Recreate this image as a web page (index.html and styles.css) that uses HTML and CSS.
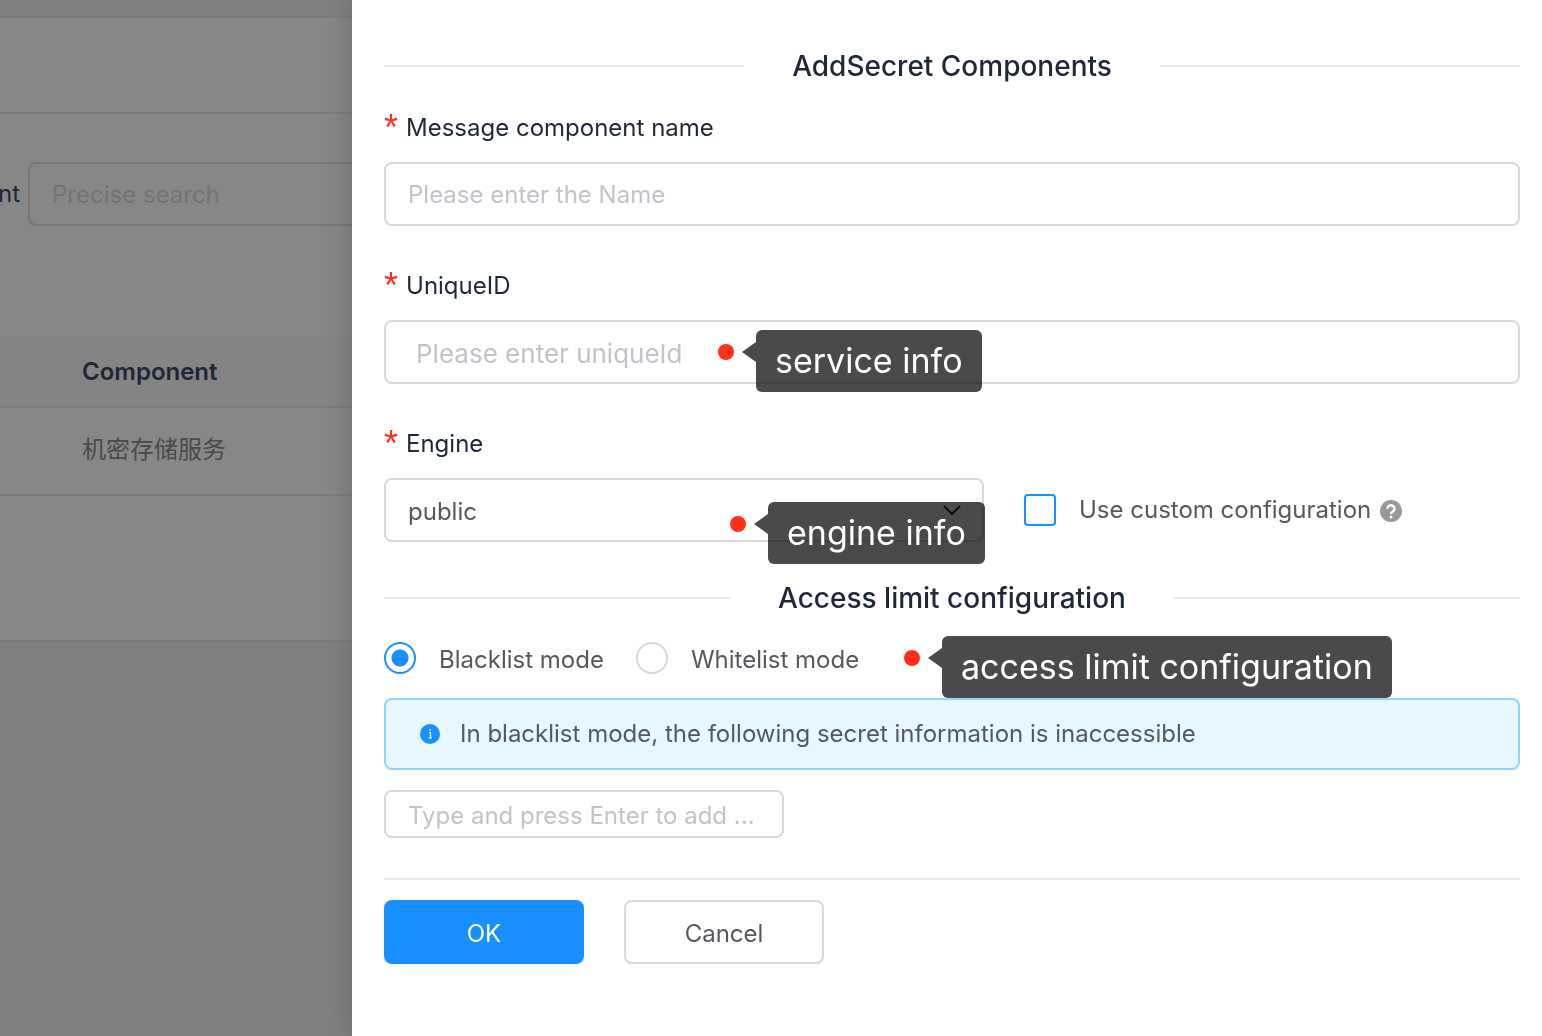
FILE: index.html
```
<!DOCTYPE html>
<html lang="en">
<head>
    <meta charset="UTF-8">
    <meta name="viewport" content="width=device-width, initial-scale=1.0">
    <title>AddSecret Components</title>
    <link rel="stylesheet" href="styles.css">
</head>
<body>
    <main class="page">
        <div class="page-header"></div>

        <div class="search-bar">
            <label for="search">nt</label>
            <input id="search" class="input" type="text" placeholder="Precise search">
        </div>

        <table class="list">
            <thead>
                <tr><th>Component</th></tr>
            </thead>
            <tbody>
                <tr><td>机密存储服务</td></tr>
            </tbody>
        </table>
    </main>

    <div class="mask"></div>

    <form class="drawer">
        <h2 class="divider">AddSecret Components</h2>

        <div class="field">
            <label class="field-label" for="name"><span class="required">*</span>Message component name</label>
            <input id="name" class="input" type="text" placeholder="Please enter the Name">
        </div>

        <div class="field">
            <label class="field-label" for="uniqueId"><span class="required">*</span>UniqueID</label>
            <div class="anchor">
                <input id="uniqueId" class="input input-unique" type="text" placeholder="Please enter uniqueId">
                <div class="callout callout-service">
                    <span class="dot"></span>
                    <span class="bubble">service info</span>
                </div>
            </div>
        </div>

        <div class="field">
            <label class="field-label" for="engine"><span class="required">*</span>Engine</label>
            <div class="anchor engine-row">
                <div class="select">
                    <select id="engine" class="input">
                        <option>public</option>
                    </select>
                    <svg class="chevron" viewBox="0 0 18 12" width="18" height="12">
                        <path d="M1 2l8 8 8-8" fill="none" stroke="currentColor" stroke-width="2"/>
                    </svg>
                </div>
                <label class="option">
                    <input class="checkbox" type="checkbox">
                    Use custom configuration
                </label>
                <svg class="help" viewBox="0 0 24 24" width="24" height="24">
                    <circle cx="12" cy="13" r="11" fill="#999"/>
                    <path d="M8.500 10.700a3.500 3.300 0 1 1 5.500 2.600c-1.300.9-2 1.300-2 2.700" fill="none" stroke="#fff" stroke-width="2.400"/>
                    <circle cx="12" cy="19" r="1.500" fill="#fff"/>
                </svg>
                <div class="callout callout-engine">
                    <span class="dot"></span>
                    <span class="bubble">engine info</span>
                </div>
            </div>
        </div>

        <h2 class="divider">Access limit configuration</h2>

        <div class="anchor modes">
            <label class="option">
                <input class="radio" type="radio" name="mode" checked>
                <span>Blacklist mode</span>
            </label>
            <label class="option">
                <input class="radio" type="radio" name="mode">
                <span>Whitelist mode</span>
            </label>
            <div class="callout callout-access">
                <span class="dot"></span>
                <span class="bubble">access limit configuration</span>
            </div>
        </div>

        <div class="alert">
            <svg viewBox="0 0 20 20" width="20" height="20">
                <circle cx="10" cy="10" r="10" fill="#1890ff"/>
                <path d="M10 5v2M9 8.500h1.500V14M8.500 14h3.500" fill="none" stroke="#fff" stroke-width="1.200"/>
            </svg>
            <span>In blacklist mode, the following secret information is inaccessible</span>
        </div>

        <input class="input input-tag" type="text" aria-label="Secret" placeholder="Type and press Enter to add ...">

        <div class="actions">
            <button class="btn btn-primary" type="button">OK</button>
            <button class="btn" type="button">Cancel</button>
        </div>
    </form>
</body>
</html>
```
FILE: styles.css
```
:root {
    --heading: #1f2838;
    --text: #55595e;
    --placeholder: #c0c4ca;
    --border: #d9d9d9;
    --split: #e8e8e8;
    --primary: #1890ff;
    --danger: #ff2f1a;
}

* {
    box-sizing: border-box;
}

body {
    margin: 0;
    min-height: 100vh;
    overflow: hidden;
    background-color: #f0f2f5;
    color: var(--text);
    font-family: Inter, "Noto Sans CJK SC", sans-serif;
    font-size: 24px;
    line-height: 36px;
}

/* page behind the drawer */
.page {
    --heading: #3a4a66;
    --text: #8c8c8c;
    --placeholder: #d6d9dd;
    --border: #dfe1e5;
    margin-top: 16px;
    padding-bottom: 144px;
    border-top: 2px solid var(--split);
    border-bottom: 2px solid var(--split);
    background-color: #fff;
    color: var(--text);
}

.page-header {
    height: 96px;
    border-bottom: 2px solid var(--split);
}

.search-bar {
    display: flex;
    align-items: center;
    gap: 8px;
    padding: 48px 0 110px;
    color: var(--heading);
}

.search-bar label {
    width: 20px;
    display: flex;
    justify-content: flex-end;
}

.search-bar .input {
    flex: 1;
}

.list {
    width: 100%;
    border-collapse: separate;
    border-spacing: 0;
}

.list th,
.list td {
    padding: 24px 82px 26px;
    border-bottom: 2px solid var(--split);
    text-align: left;
}

.list th {
    padding: 18px 82px 16px;
    background-color: #fafafa;
    color: var(--heading);
    font-weight: 600;
}

.mask {
    position: fixed;
    inset: 0;
    background-color: rgba(0, 0, 0, 0.47);
}

/* drawer */
.drawer {
    position: absolute;
    top: 0;
    right: 0;
    left: 352px;
    min-height: 100vh;
    padding: 44px 22px 72px 32px;
    background-color: #fff;
    box-shadow: -4px 0 24px rgba(0, 0, 0, 0.15);
}

.divider {
    display: flex;
    align-items: center;
    gap: 48px;
    margin: 0 0 22px;
    color: var(--heading);
    font-size: 28px;
    font-weight: 500;
    line-height: 44px;
}

.divider::before,
.divider::after {
    content: "";
    flex: 1;
    border-top: 2px solid var(--split);
}

.field {
    margin-bottom: 42px;
}

.field + .divider {
    margin-top: -8px;
}

.field-label {
    display: flex;
    gap: 8px;
    margin-bottom: 16px;
    color: var(--heading);
}

.required {
    color: var(--danger);
    font-family: "Liberation Sans", Arial, sans-serif;
    font-size: 36px;
}

.input {
    display: block;
    width: 100%;
    height: 64px;
    padding: 0 22px;
    border: 2px solid var(--border);
    border-radius: 8px;
    background-color: transparent;
    color: var(--text);
    font: inherit;
    appearance: none;
}

.input::placeholder {
    color: var(--placeholder);
    opacity: 1;
}

.input-unique {
    padding: 2px 30px 0;
    font-size: 26px;
}

.input-tag {
    width: 400px;
    height: 48px;
    margin: 20px 0 40px;
    padding-top: 2px;
}

.anchor {
    position: relative;
}

.engine-row {
    display: flex;
    align-items: center;
}

.select {
    position: relative;
    width: 600px;
    margin-right: 40px;
}

.select .input {
    padding-top: 4px;
}

.chevron {
    position: absolute;
    top: 26px;
    right: 23px;
    color: var(--heading);
}

.option {
    display: flex;
    align-items: center;
    gap: 23px;
}

.checkbox,
.radio {
    flex: none;
    width: 32px;
    height: 32px;
    margin: 0;
    border: 2px solid var(--border);
    background-color: #fff;
    appearance: none;
}

.checkbox {
    border-color: var(--primary);
    border-radius: 4px;
}

.radio {
    border-radius: 50%;
}

.radio + span {
    padding-top: 4px;
}

.radio:checked {
    border-color: var(--primary);
    background-image: radial-gradient(circle, var(--primary) 8px, transparent 9px);
}

.help {
    margin-left: 8px;
}

.modes {
    display: flex;
    gap: 32px;
    height: 32px;
    margin-bottom: 24px;
}

/* annotations over the form */
.callout {
    position: absolute;
    display: flex;
    align-items: flex-start;
    gap: 22px;
}

.callout-service {
    top: 10px;
    left: 334px;
}

.callout-engine {
    top: 24px;
    left: 346px;
}

.callout-access {
    top: -6px;
    left: 520px;
}

.dot {
    width: 16px;
    height: 16px;
    margin-top: 14px;
    border-radius: 50%;
    background-color: var(--danger);
}

.bubble {
    position: relative;
    padding: 8px 19px;
    border-radius: 6px;
    background-color: rgba(0, 0, 0, 0.71);
    color: #fff;
    font-size: 34px;
    line-height: 46px;
    white-space: nowrap;
}

.bubble::before {
    content: "";
    position: absolute;
    top: 12px;
    right: 100%;
    border: solid transparent;
    border-width: 10px 14px 10px 0;
    border-right-color: rgba(0, 0, 0, 0.71);
}

.alert {
    display: flex;
    align-items: center;
    gap: 20px;
    padding: 16px 34px;
    border: 2px solid #91d5ff;
    border-radius: 8px;
    background-color: #e6f7ff;
}

.actions {
    display: flex;
    gap: 40px;
    padding-top: 20px;
    border-top: 2px solid var(--split);
}

.btn {
    width: 200px;
    height: 64px;
    padding-top: 4px;
    border: 2px solid var(--border);
    border-radius: 8px;
    background-color: #fff;
    box-shadow: 0 4px 0 rgba(0, 0, 0, 0.02);
    color: var(--text);
    font: inherit;
    cursor: pointer;
}

.btn-primary {
    border-color: var(--primary);
    background-color: var(--primary);
    color: #fff;
}
```
